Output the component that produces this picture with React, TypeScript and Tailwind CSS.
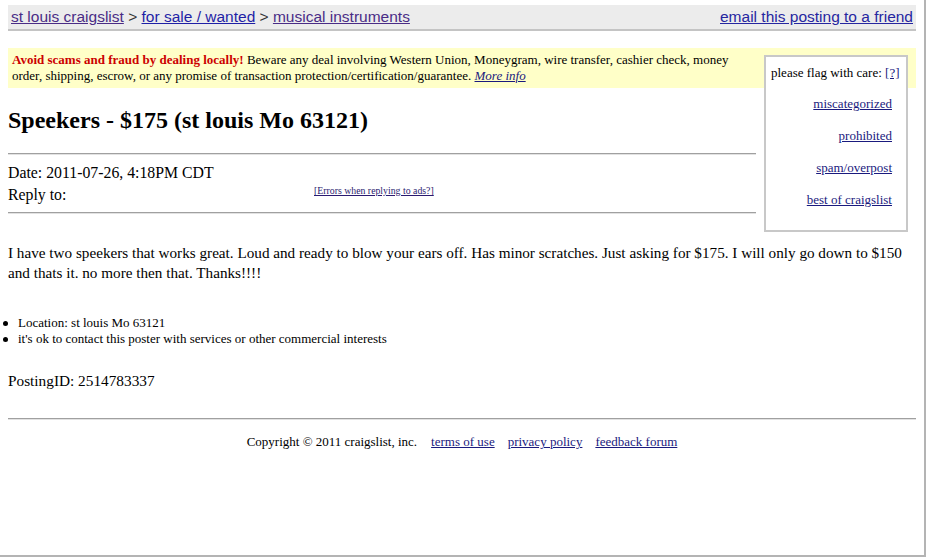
export default function App() {
  return (
    <div className="h-[558px] w-[927px] bg-white">
      <div className="h-[557px] w-[926px] border-r-2 border-b-2 border-r-[#b4b4b4] border-b-[#b4b4b4] px-[8px] pt-[5px] font-['Liberation_Serif',serif] text-black">
        {/* Breadcrumb bar */}
        <div className="flex h-[26px] items-center justify-between border-b-2 border-[#c4c4c4] bg-[#ececec] pl-[3px] pr-[3px] font-['Liberation_Sans',Arial,sans-serif] text-[15.5px] leading-[20px]">
          <div>
            <a className="text-[#4a2c86] underline">st louis craigslist</a>
            <span className="text-[#333]"> &gt; </span>
            <a className="text-[#1f1fa6] underline">for sale / wanted</a>
            <span className="text-[#333]"> &gt; </span>
            <a className="text-[#4a2c86] underline">musical instruments</a>
          </div>
          <a className="text-[#2626a0] underline">email this posting to a friend</a>
        </div>

        {/* Flag box */}
        <div className="float-right mt-[24px] mr-[8px] ml-[8px] h-[177px] w-[144px] border-2 border-[#c8c8c8] bg-white pt-[8px] text-[13px]">
          <div className="pl-[5px] leading-[16px]">
            please flag with care: <a className="text-[#1a1a7e] underline">[?]</a>
          </div>
          <div className="mt-[7px] pr-[14px] text-right">
            <div className="leading-[32px]"><a className="text-[#1a1a7e] underline">miscategorized</a></div>
            <div className="leading-[32px]"><a className="text-[#1a1a7e] underline">prohibited</a></div>
            <div className="leading-[32px]"><a className="text-[#1a1a7e] underline">spam/overpost</a></div>
            <div className="leading-[32px]"><a className="text-[#1a1a7e] underline">best of craigslist</a></div>
          </div>
        </div>

        {/* Scam warning */}
        <div className="mt-[17px] bg-[#ffffc8] px-[4px] py-[4px] text-[13px] leading-[16px]">
          <b className="text-[#cc0000]">Avoid scams and fraud by dealing locally!</b> Beware any deal involving
          Western Union, Moneygram, wire transfer, cashier check, money order, shipping, escrow, or any promise of
          transaction protection/certification/guarantee. <a className="italic text-[#1a1a7e] underline">More info</a>
        </div>

        {/* Title */}
        <h2 className="mt-[18px] text-[24px] font-bold leading-[28px]">Speekers - $175 (st louis Mo 63121)</h2>

        <div className="mt-[19px] overflow-hidden border-t border-b border-t-[#a0a0a0] border-b-[#e2e2e2]" />

        <div className="mt-[7px] text-[15.8px] leading-[22px]">
          <div>Date: 2011-07-26, 4:18PM CDT</div>
          <div className="flex">
            <span className="w-[306px]">Reply to:</span>
            <a className="mt-[1px] text-[9.8px] leading-[12px] text-[#2a1a70] underline">[Errors when replying to ads?]</a>
          </div>
        </div>

        <div className="mt-[6px] overflow-hidden border-t border-b border-t-[#a0a0a0] border-b-[#e2e2e2]" />

        {/* Body */}
        <div className="mt-[29px] text-[15.2px] leading-[20px]">
          I have two speekers that works great. Loud and ready to blow your ears off. Has minor scratches. Just asking for
          $175. I will only go down to $150 and thats it. no more then that. Thanks!!!!
        </div>

        <ul className="mt-[32px] -ml-[6px] text-[13px] leading-[16px]">
          <li className="flex items-center">
            <span className="ml-[1px] mr-[10px] h-[5px] w-[5px] rounded-full bg-black" />
            <span>Location: st louis Mo 63121</span>
          </li>
          <li className="flex items-center">
            <span className="ml-[1px] mr-[10px] h-[5px] w-[5px] rounded-full bg-black" />
            <span>it's ok to contact this poster with services or other commercial interests</span>
          </li>
        </ul>

        <div className="mt-[24px] text-[15.3px] leading-[20px]">PostingID: 2514783337</div>

        <div className="mt-[27px] border-t border-b border-t-[#a0a0a0] border-b-[#e2e2e2]" />

        {/* Footer */}
        <div className="mt-[14px] flex justify-center gap-[13px] text-[13px] leading-[16px]">
          <span className="mr-[1px]">Copyright © 2011 craigslist, inc.</span>
          <a className="text-[#1a1a7e] underline">terms of use</a>
          <a className="text-[#1a1a7e] underline">privacy policy</a>
          <a className="text-[#1a1a7e] underline">feedback forum</a>
        </div>
      </div>
    </div>
  );
}
